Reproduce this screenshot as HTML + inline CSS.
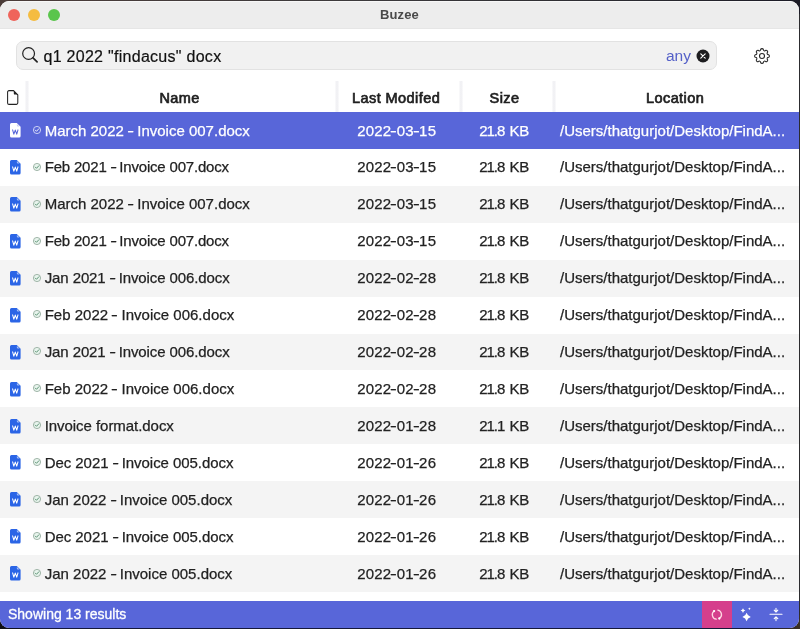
<!DOCTYPE html>
<html>
<head>
<meta charset="utf-8">
<title>Buzee</title>
<style>
*{box-sizing:border-box;margin:0;padding:0}
html,body{width:800px;height:629px;overflow:hidden;background:#2c2c2f}
.bg{position:absolute;left:0;width:800px;height:14px}
body{font-family:"Liberation Sans",sans-serif;position:relative}
#win{position:absolute;left:0;top:1px;width:799px;height:626.5px;background:#fff;border-radius:9px;overflow:hidden}
#in{position:absolute;left:0;top:-1px;width:799px;height:629px;will-change:transform}
#in>*{position:absolute}
#title{left:0;top:1px;width:100%;height:27.6px;background:#ededed;border-bottom:1px solid #e6e6e6;border-top:1px solid #f7f7f7}
#title .t{position:absolute;left:0;width:100%;top:5px;text-align:center;font-size:13px;font-weight:bold;color:#4a4a4a;letter-spacing:.1px}
.dot{position:absolute;top:7px;width:12px;height:12px;border-radius:50%}
#search{left:16px;top:41px;width:701px;height:29px;background:#f1f1f1;border:1px solid #e2e2e2;border-radius:7px}
#search .q{position:absolute;left:26.5px;top:5.8px;font-size:16px;letter-spacing:.28px;color:#111;white-space:nowrap;-webkit-text-stroke:.2px #111}
#search .any{position:absolute;left:649px;top:5px;font-size:15.5px;color:#5561c8}
svg{position:absolute;overflow:visible}
#hdr{left:0;top:81px;width:100%;height:31px;font-size:14.5px;color:#1f1f1f;-webkit-text-stroke:.7px currentColor;letter-spacing:.42px}
#hdr div.h{position:absolute;top:9px;width:200px;margin-left:-100px;text-align:center;white-space:nowrap}
#hdr i{position:absolute;top:0;height:31px;width:4px;background:linear-gradient(90deg,#fbfbfc,#f1f1f4 40%,#f1f1f4 60%,#fbfbfc)}
.row{left:0;width:100%;font-size:15px;color:#222;white-space:nowrap;-webkit-text-stroke:.25px currentColor}
.row.g{background:#f4f4f4}
.row.s{background:#5866d9;color:#fff}
.row span{position:absolute;top:9.4px}
.row .n{left:44.7px}
.row i{display:inline-block;font-style:normal;transform:scaleX(1.35)}
.row .d{left:336.2px;width:121px;text-align:center;letter-spacing:.23px}
.row .z{left:459.1px;width:90px;text-align:center;letter-spacing:-.3px}
.row .z b{font-weight:normal;letter-spacing:-1px;margin-right:1.4px}
.row .l{left:560px}
#status{left:0;top:601px;width:100%;height:28px;background:#5866d9;color:#fff;font-size:14px}
#status .t{position:absolute;left:8px;top:5px;-webkit-text-stroke:.3px #fff}
#status .pink{position:absolute;left:702.4px;top:0;width:29.6px;height:28px;background:#d53f8c}
</style>
</head>
<body>
<div class="bg" style="top:0;background:linear-gradient(90deg,#4b3c39,#3c3a3c 45%,#2a2a30 80%,#1c1b26)"></div>
<div class="bg" style="top:615px;background:linear-gradient(90deg,#0e0e12,#15183a 6%,#15183a 94%,#3a2f25)"></div>
<div id="win"><div id="in">
  <div id="title">
    <div class="dot" style="left:8px;background:#ef645b"></div>
    <div class="dot" style="left:28px;background:#f5bc40"></div>
    <div class="dot" style="left:48px;background:#5ac54c"></div>
    <div class="t">Buzee</div>
  </div>
  <div id="search">
    <svg style="left:0;top:0" width="30" height="29"><g fill="none" stroke="#222" stroke-linecap="round"><circle cx="11.6" cy="11.5" r="5.9" stroke-width="1.2"/><path d="M16 15.9L20.1 19.9" stroke-width="1.7"/></g></svg>
    <span class="q">q1 2022 "findacus" docx</span>
    <span class="any">any</span>
    <svg style="left:679.1px;top:6.7px" width="14" height="14" viewBox="-7 -7 14 14"><circle r="6.5" fill="#1d1d1f"/><path d="M-2.2-2.2L2.2 2.2M2.2-2.2L-2.2 2.2" stroke="#fff" stroke-width="1.1" stroke-linecap="round"/></svg>
  </div>
  <svg id="gear" style="left:754px;top:47.8px" width="16" height="16" viewBox="-8 -8 16 16"><path d="M-2.14 -5.17 Q-1.35 -5.43 -1.30 -6.68 Q-1.03 -7.33 0.00 -7.40 Q1.03 -7.33 1.30 -6.68 Q1.35 -5.43 2.14 -5.17 Q2.88 -4.80 3.80 -5.64 Q4.45 -5.91 5.23 -5.23 Q5.91 -4.45 5.64 -3.80 Q4.80 -2.88 5.17 -2.14 Q5.43 -1.35 6.68 -1.30 Q7.33 -1.03 7.40 0.00 Q7.33 1.03 6.68 1.30 Q5.43 1.35 5.17 2.14 Q4.80 2.88 5.64 3.80 Q5.91 4.45 5.23 5.23 Q4.45 5.91 3.80 5.64 Q2.88 4.80 2.14 5.17 Q1.35 5.43 1.30 6.68 Q1.03 7.33 0.00 7.40 Q-1.03 7.33 -1.30 6.68 Q-1.35 5.43 -2.14 5.17 Q-2.88 4.80 -3.80 5.64 Q-4.45 5.91 -5.23 5.23 Q-5.91 4.45 -5.64 3.80 Q-4.80 2.88 -5.17 2.14 Q-5.43 1.35 -6.68 1.30 Q-7.33 1.03 -7.40 0.00 Q-7.33 -1.03 -6.68 -1.30 Q-5.43 -1.35 -5.17 -2.14 Q-4.80 -2.88 -5.64 -3.80 Q-5.91 -4.45 -5.23 -5.23 Q-4.45 -5.91 -3.80 -5.64 Q-2.88 -4.80 -2.14 -5.17Z" fill="none" stroke="#2a2a2a" stroke-width="1.1" stroke-linejoin="round"/><circle r="2.5" fill="none" stroke="#2a2a2a" stroke-width="1.1"/></svg>
  <div id="hdr">
    <i style="left:25px"></i><i style="left:334.5px"></i><i style="left:459.2px"></i><i style="left:552.2px"></i>
    <svg style="left:6.8px;top:9px" width="11.4" height="15" viewBox="0 0 11.4 15"><path d="M2 .6h4.6l4.2 4.2v8a1.6 1.6 0 0 1-1.6 1.6H2A1.4 1.4 0 0 1 .6 13V2A1.4 1.4 0 0 1 2 .6z" fill="none" stroke="#222" stroke-width="1.05" stroke-linejoin="round"/><path d="M6.8.8v2.6a1.2 1.2 0 0 0 1.2 1.2h2.6z" fill="#222"/></svg>
    <div class="h" style="left:179.6px">Name</div>
    <div class="h" style="left:396.1px">Last Modifed</div>
    <div class="h" style="left:504.5px">Size</div>
    <div class="h" style="left:675.1px">Location</div>
  </div>
  <div class="row s" style="top:112px;height:37px"><svg style="left:10px;top:11.15px" width="10.6" height="14.6" viewBox="0 0 10.6 14.6"><path d="M1.5 0h5.3l3.8 3.8v9.3a1.5 1.5 0 0 1-1.5 1.5H1.5A1.5 1.5 0 0 1 0 13.1V1.5A1.5 1.5 0 0 1 1.5 0z" fill="#fff"/><path d="M6.9.9v1.7a1 1 0 0 0 1 1h1.7z" fill="#c9cdf2"/><path d="M2.6 6.9l1.25 4.3 1.45-4.1 1.45 4.1L8 6.9" fill="none" stroke="#5866d9" stroke-width="1.05" stroke-linejoin="round" stroke-linecap="round"/></svg><svg style="left:32.9px;top:13.85px" width="8" height="8" viewBox="-4 -4 8 8"><circle r="3.6" fill="none" stroke="#e6e8fa" stroke-width=".8"/><path d="M-1.7 .1L-.5 1.3 1.8-1.2" fill="none" stroke="#fff" stroke-width=".9" stroke-linecap="round" stroke-linejoin="round"/></svg><span class="n" style="top:9.5px">March 2022 <i>-</i> Invoice 007.docx</span><span class="d" style="top:9.5px">2022<i>-</i>03<i>-</i>15</span><span class="z" style="top:9.5px"><b>21.8</b> KB</span><span class="l" style="top:9.5px">/Users/thatgurjot/Desktop/FindA...</span></div>
  <div class="row" style="top:149px;height:37px"><svg style="left:10px;top:11.08px" width="10.6" height="14.6" viewBox="0 0 10.6 14.6"><path d="M1.5 0h5.3l3.8 3.8v9.3a1.5 1.5 0 0 1-1.5 1.5H1.5A1.5 1.5 0 0 1 0 13.1V1.5A1.5 1.5 0 0 1 1.5 0z" fill="#2b65e6"/><path d="M6.9.9v1.7a1 1 0 0 0 1 1h1.7z" fill="#a9c1f7"/><path d="M2.6 6.9l1.25 4.3 1.45-4.1 1.45 4.1L8 6.9" fill="none" stroke="#fff" stroke-width="1.05" stroke-linejoin="round" stroke-linecap="round"/></svg><svg style="left:32.9px;top:13.78px" width="8" height="8" viewBox="-4 -4 8 8"><circle r="3.6" fill="#e8f4ed" stroke="#8da697" stroke-width=".8"/><path d="M-1.7 .1L-.5 1.3 1.8-1.2" fill="none" stroke="#4f8a69" stroke-width=".9" stroke-linecap="round" stroke-linejoin="round"/></svg><span class="n" style="top:9.47px;letter-spacing:-0.19px">Feb 2021 <i>-</i> Invoice 007.docx</span><span class="d" style="top:9.47px">2022<i>-</i>03<i>-</i>15</span><span class="z" style="top:9.47px"><b>21.8</b> KB</span><span class="l" style="top:9.47px">/Users/thatgurjot/Desktop/FindA...</span></div>
  <div class="row g" style="top:186px;height:37px"><svg style="left:10px;top:11.00px" width="10.6" height="14.6" viewBox="0 0 10.6 14.6"><path d="M1.5 0h5.3l3.8 3.8v9.3a1.5 1.5 0 0 1-1.5 1.5H1.5A1.5 1.5 0 0 1 0 13.1V1.5A1.5 1.5 0 0 1 1.5 0z" fill="#2b65e6"/><path d="M6.9.9v1.7a1 1 0 0 0 1 1h1.7z" fill="#a9c1f7"/><path d="M2.6 6.9l1.25 4.3 1.45-4.1 1.45 4.1L8 6.9" fill="none" stroke="#fff" stroke-width="1.05" stroke-linejoin="round" stroke-linecap="round"/></svg><svg style="left:32.9px;top:13.70px" width="8" height="8" viewBox="-4 -4 8 8"><circle r="3.6" fill="#e8f4ed" stroke="#8da697" stroke-width=".8"/><path d="M-1.7 .1L-.5 1.3 1.8-1.2" fill="none" stroke="#4f8a69" stroke-width=".9" stroke-linecap="round" stroke-linejoin="round"/></svg><span class="n" style="top:9.44px">March 2022 <i>-</i> Invoice 007.docx</span><span class="d" style="top:9.44px">2022<i>-</i>03<i>-</i>15</span><span class="z" style="top:9.44px"><b>21.8</b> KB</span><span class="l" style="top:9.44px">/Users/thatgurjot/Desktop/FindA...</span></div>
  <div class="row" style="top:223px;height:37px"><svg style="left:10px;top:10.92px" width="10.6" height="14.6" viewBox="0 0 10.6 14.6"><path d="M1.5 0h5.3l3.8 3.8v9.3a1.5 1.5 0 0 1-1.5 1.5H1.5A1.5 1.5 0 0 1 0 13.1V1.5A1.5 1.5 0 0 1 1.5 0z" fill="#2b65e6"/><path d="M6.9.9v1.7a1 1 0 0 0 1 1h1.7z" fill="#a9c1f7"/><path d="M2.6 6.9l1.25 4.3 1.45-4.1 1.45 4.1L8 6.9" fill="none" stroke="#fff" stroke-width="1.05" stroke-linejoin="round" stroke-linecap="round"/></svg><svg style="left:32.9px;top:13.62px" width="8" height="8" viewBox="-4 -4 8 8"><circle r="3.6" fill="#e8f4ed" stroke="#8da697" stroke-width=".8"/><path d="M-1.7 .1L-.5 1.3 1.8-1.2" fill="none" stroke="#4f8a69" stroke-width=".9" stroke-linecap="round" stroke-linejoin="round"/></svg><span class="n" style="top:9.41px;letter-spacing:-0.19px">Feb 2021 <i>-</i> Invoice 007.docx</span><span class="d" style="top:9.41px">2022<i>-</i>03<i>-</i>15</span><span class="z" style="top:9.41px"><b>21.8</b> KB</span><span class="l" style="top:9.41px">/Users/thatgurjot/Desktop/FindA...</span></div>
  <div class="row g" style="top:260px;height:37px"><svg style="left:10px;top:10.85px" width="10.6" height="14.6" viewBox="0 0 10.6 14.6"><path d="M1.5 0h5.3l3.8 3.8v9.3a1.5 1.5 0 0 1-1.5 1.5H1.5A1.5 1.5 0 0 1 0 13.1V1.5A1.5 1.5 0 0 1 1.5 0z" fill="#2b65e6"/><path d="M6.9.9v1.7a1 1 0 0 0 1 1h1.7z" fill="#a9c1f7"/><path d="M2.6 6.9l1.25 4.3 1.45-4.1 1.45 4.1L8 6.9" fill="none" stroke="#fff" stroke-width="1.05" stroke-linejoin="round" stroke-linecap="round"/></svg><svg style="left:32.9px;top:13.55px" width="8" height="8" viewBox="-4 -4 8 8"><circle r="3.6" fill="#e8f4ed" stroke="#8da697" stroke-width=".8"/><path d="M-1.7 .1L-.5 1.3 1.8-1.2" fill="none" stroke="#4f8a69" stroke-width=".9" stroke-linecap="round" stroke-linejoin="round"/></svg><span class="n" style="top:9.38px;letter-spacing:-0.1px">Jan 2021 <i>-</i> Invoice 006.docx</span><span class="d" style="top:9.38px">2022<i>-</i>02<i>-</i>28</span><span class="z" style="top:9.38px"><b>21.8</b> KB</span><span class="l" style="top:9.38px">/Users/thatgurjot/Desktop/FindA...</span></div>
  <div class="row" style="top:297px;height:37px"><svg style="left:10px;top:10.77px" width="10.6" height="14.6" viewBox="0 0 10.6 14.6"><path d="M1.5 0h5.3l3.8 3.8v9.3a1.5 1.5 0 0 1-1.5 1.5H1.5A1.5 1.5 0 0 1 0 13.1V1.5A1.5 1.5 0 0 1 1.5 0z" fill="#2b65e6"/><path d="M6.9.9v1.7a1 1 0 0 0 1 1h1.7z" fill="#a9c1f7"/><path d="M2.6 6.9l1.25 4.3 1.45-4.1 1.45 4.1L8 6.9" fill="none" stroke="#fff" stroke-width="1.05" stroke-linejoin="round" stroke-linecap="round"/></svg><svg style="left:32.9px;top:13.47px" width="8" height="8" viewBox="-4 -4 8 8"><circle r="3.6" fill="#e8f4ed" stroke="#8da697" stroke-width=".8"/><path d="M-1.7 .1L-.5 1.3 1.8-1.2" fill="none" stroke="#4f8a69" stroke-width=".9" stroke-linecap="round" stroke-linejoin="round"/></svg><span class="n" style="top:9.35px;letter-spacing:0.01px">Feb 2022 <i>-</i> Invoice 006.docx</span><span class="d" style="top:9.35px">2022<i>-</i>02<i>-</i>28</span><span class="z" style="top:9.35px"><b>21.8</b> KB</span><span class="l" style="top:9.35px">/Users/thatgurjot/Desktop/FindA...</span></div>
  <div class="row g" style="top:334px;height:36px"><svg style="left:10px;top:10.70px" width="10.6" height="14.6" viewBox="0 0 10.6 14.6"><path d="M1.5 0h5.3l3.8 3.8v9.3a1.5 1.5 0 0 1-1.5 1.5H1.5A1.5 1.5 0 0 1 0 13.1V1.5A1.5 1.5 0 0 1 1.5 0z" fill="#2b65e6"/><path d="M6.9.9v1.7a1 1 0 0 0 1 1h1.7z" fill="#a9c1f7"/><path d="M2.6 6.9l1.25 4.3 1.45-4.1 1.45 4.1L8 6.9" fill="none" stroke="#fff" stroke-width="1.05" stroke-linejoin="round" stroke-linecap="round"/></svg><svg style="left:32.9px;top:13.40px" width="8" height="8" viewBox="-4 -4 8 8"><circle r="3.6" fill="#e8f4ed" stroke="#8da697" stroke-width=".8"/><path d="M-1.7 .1L-.5 1.3 1.8-1.2" fill="none" stroke="#4f8a69" stroke-width=".9" stroke-linecap="round" stroke-linejoin="round"/></svg><span class="n" style="top:9.32px;letter-spacing:-0.1px">Jan 2021 <i>-</i> Invoice 006.docx</span><span class="d" style="top:9.32px">2022<i>-</i>02<i>-</i>28</span><span class="z" style="top:9.32px"><b>21.8</b> KB</span><span class="l" style="top:9.32px">/Users/thatgurjot/Desktop/FindA...</span></div>
  <div class="row" style="top:370px;height:37px"><svg style="left:10px;top:11.62px" width="10.6" height="14.6" viewBox="0 0 10.6 14.6"><path d="M1.5 0h5.3l3.8 3.8v9.3a1.5 1.5 0 0 1-1.5 1.5H1.5A1.5 1.5 0 0 1 0 13.1V1.5A1.5 1.5 0 0 1 1.5 0z" fill="#2b65e6"/><path d="M6.9.9v1.7a1 1 0 0 0 1 1h1.7z" fill="#a9c1f7"/><path d="M2.6 6.9l1.25 4.3 1.45-4.1 1.45 4.1L8 6.9" fill="none" stroke="#fff" stroke-width="1.05" stroke-linejoin="round" stroke-linecap="round"/></svg><svg style="left:32.9px;top:14.32px" width="8" height="8" viewBox="-4 -4 8 8"><circle r="3.6" fill="#e8f4ed" stroke="#8da697" stroke-width=".8"/><path d="M-1.7 .1L-.5 1.3 1.8-1.2" fill="none" stroke="#4f8a69" stroke-width=".9" stroke-linecap="round" stroke-linejoin="round"/></svg><span class="n" style="top:10.29px;letter-spacing:0.01px">Feb 2022 <i>-</i> Invoice 006.docx</span><span class="d" style="top:10.29px">2022<i>-</i>02<i>-</i>28</span><span class="z" style="top:10.29px"><b>21.8</b> KB</span><span class="l" style="top:10.29px">/Users/thatgurjot/Desktop/FindA...</span></div>
  <div class="row g" style="top:407px;height:37px"><svg style="left:10px;top:11.55px" width="10.6" height="14.6" viewBox="0 0 10.6 14.6"><path d="M1.5 0h5.3l3.8 3.8v9.3a1.5 1.5 0 0 1-1.5 1.5H1.5A1.5 1.5 0 0 1 0 13.1V1.5A1.5 1.5 0 0 1 1.5 0z" fill="#2b65e6"/><path d="M6.9.9v1.7a1 1 0 0 0 1 1h1.7z" fill="#a9c1f7"/><path d="M2.6 6.9l1.25 4.3 1.45-4.1 1.45 4.1L8 6.9" fill="none" stroke="#fff" stroke-width="1.05" stroke-linejoin="round" stroke-linecap="round"/></svg><svg style="left:32.9px;top:14.25px" width="8" height="8" viewBox="-4 -4 8 8"><circle r="3.6" fill="#e8f4ed" stroke="#8da697" stroke-width=".8"/><path d="M-1.7 .1L-.5 1.3 1.8-1.2" fill="none" stroke="#4f8a69" stroke-width=".9" stroke-linecap="round" stroke-linejoin="round"/></svg><span class="n" style="top:10.26px;letter-spacing:-0.05px">Invoice format.docx</span><span class="d" style="top:10.26px">2022<i>-</i>01<i>-</i>28</span><span class="z" style="top:10.26px"><b>21.1</b> KB</span><span class="l" style="top:10.26px">/Users/thatgurjot/Desktop/FindA...</span></div>
  <div class="row" style="top:444px;height:37px"><svg style="left:10px;top:11.47px" width="10.6" height="14.6" viewBox="0 0 10.6 14.6"><path d="M1.5 0h5.3l3.8 3.8v9.3a1.5 1.5 0 0 1-1.5 1.5H1.5A1.5 1.5 0 0 1 0 13.1V1.5A1.5 1.5 0 0 1 1.5 0z" fill="#2b65e6"/><path d="M6.9.9v1.7a1 1 0 0 0 1 1h1.7z" fill="#a9c1f7"/><path d="M2.6 6.9l1.25 4.3 1.45-4.1 1.45 4.1L8 6.9" fill="none" stroke="#fff" stroke-width="1.05" stroke-linejoin="round" stroke-linecap="round"/></svg><svg style="left:32.9px;top:14.17px" width="8" height="8" viewBox="-4 -4 8 8"><circle r="3.6" fill="#e8f4ed" stroke="#8da697" stroke-width=".8"/><path d="M-1.7 .1L-.5 1.3 1.8-1.2" fill="none" stroke="#4f8a69" stroke-width=".9" stroke-linecap="round" stroke-linejoin="round"/></svg><span class="n" style="top:10.23px;letter-spacing:-0.05px">Dec 2021 <i>-</i> Invoice 005.docx</span><span class="d" style="top:10.23px">2022<i>-</i>01<i>-</i>26</span><span class="z" style="top:10.23px"><b>21.8</b> KB</span><span class="l" style="top:10.23px">/Users/thatgurjot/Desktop/FindA...</span></div>
  <div class="row g" style="top:481px;height:37px"><svg style="left:10px;top:11.40px" width="10.6" height="14.6" viewBox="0 0 10.6 14.6"><path d="M1.5 0h5.3l3.8 3.8v9.3a1.5 1.5 0 0 1-1.5 1.5H1.5A1.5 1.5 0 0 1 0 13.1V1.5A1.5 1.5 0 0 1 1.5 0z" fill="#2b65e6"/><path d="M6.9.9v1.7a1 1 0 0 0 1 1h1.7z" fill="#a9c1f7"/><path d="M2.6 6.9l1.25 4.3 1.45-4.1 1.45 4.1L8 6.9" fill="none" stroke="#fff" stroke-width="1.05" stroke-linejoin="round" stroke-linecap="round"/></svg><svg style="left:32.9px;top:14.10px" width="8" height="8" viewBox="-4 -4 8 8"><circle r="3.6" fill="#e8f4ed" stroke="#8da697" stroke-width=".8"/><path d="M-1.7 .1L-.5 1.3 1.8-1.2" fill="none" stroke="#4f8a69" stroke-width=".9" stroke-linecap="round" stroke-linejoin="round"/></svg><span class="n" style="top:10.2px">Jan 2022 <i>-</i> Invoice 005.docx</span><span class="d" style="top:10.2px">2022<i>-</i>01<i>-</i>26</span><span class="z" style="top:10.2px"><b>21.8</b> KB</span><span class="l" style="top:10.2px">/Users/thatgurjot/Desktop/FindA...</span></div>
  <div class="row" style="top:518px;height:37px"><svg style="left:10px;top:11.32px" width="10.6" height="14.6" viewBox="0 0 10.6 14.6"><path d="M1.5 0h5.3l3.8 3.8v9.3a1.5 1.5 0 0 1-1.5 1.5H1.5A1.5 1.5 0 0 1 0 13.1V1.5A1.5 1.5 0 0 1 1.5 0z" fill="#2b65e6"/><path d="M6.9.9v1.7a1 1 0 0 0 1 1h1.7z" fill="#a9c1f7"/><path d="M2.6 6.9l1.25 4.3 1.45-4.1 1.45 4.1L8 6.9" fill="none" stroke="#fff" stroke-width="1.05" stroke-linejoin="round" stroke-linecap="round"/></svg><svg style="left:32.9px;top:14.02px" width="8" height="8" viewBox="-4 -4 8 8"><circle r="3.6" fill="#e8f4ed" stroke="#8da697" stroke-width=".8"/><path d="M-1.7 .1L-.5 1.3 1.8-1.2" fill="none" stroke="#4f8a69" stroke-width=".9" stroke-linecap="round" stroke-linejoin="round"/></svg><span class="n" style="top:10.17px;letter-spacing:-0.05px">Dec 2021 <i>-</i> Invoice 005.docx</span><span class="d" style="top:10.17px">2022<i>-</i>01<i>-</i>26</span><span class="z" style="top:10.17px"><b>21.8</b> KB</span><span class="l" style="top:10.17px">/Users/thatgurjot/Desktop/FindA...</span></div>
  <div class="row g" style="top:555px;height:37px"><svg style="left:10px;top:11.25px" width="10.6" height="14.6" viewBox="0 0 10.6 14.6"><path d="M1.5 0h5.3l3.8 3.8v9.3a1.5 1.5 0 0 1-1.5 1.5H1.5A1.5 1.5 0 0 1 0 13.1V1.5A1.5 1.5 0 0 1 1.5 0z" fill="#2b65e6"/><path d="M6.9.9v1.7a1 1 0 0 0 1 1h1.7z" fill="#a9c1f7"/><path d="M2.6 6.9l1.25 4.3 1.45-4.1 1.45 4.1L8 6.9" fill="none" stroke="#fff" stroke-width="1.05" stroke-linejoin="round" stroke-linecap="round"/></svg><svg style="left:32.9px;top:13.95px" width="8" height="8" viewBox="-4 -4 8 8"><circle r="3.6" fill="#e8f4ed" stroke="#8da697" stroke-width=".8"/><path d="M-1.7 .1L-.5 1.3 1.8-1.2" fill="none" stroke="#4f8a69" stroke-width=".9" stroke-linecap="round" stroke-linejoin="round"/></svg><span class="n" style="top:10.14px">Jan 2022 <i>-</i> Invoice 005.docx</span><span class="d" style="top:10.14px">2022<i>-</i>01<i>-</i>26</span><span class="z" style="top:10.14px"><b>21.8</b> KB</span><span class="l" style="top:10.14px">/Users/thatgurjot/Desktop/FindA...</span></div>

  <div id="status"><span class="t">Showing 13 results</span><div class="pink"></div>
  <svg style="left:0;top:0" width="799" height="28"><g fill="none" stroke="#fed7e2" stroke-width="1.3" stroke-linecap="round" stroke-linejoin="round"><path d="M714.07 9.98A4.6 4.6 0 0 0 716.26 18.16"/><path d="M717.86 9.1A4.6 4.6 0 0 1 719.34 17.5"/></g><circle cx="714.1" cy="10.1" r="1.15" fill="#fff"/><circle cx="719.3" cy="17.5" r="1.15" fill="#fff"/><path d="M746.6 11.8Q747.524 15.076 750.8000000000001 16Q747.524 16.924 746.6 20.2Q745.676 16.924 742.4 16Q745.676 15.076 746.6 11.8ZM743 7.199999999999999Q743.528 9.072 745.4 9.6Q743.528 10.128 743 12.0Q742.472 10.128 740.6 9.6Q742.472 9.072 743 7.199999999999999ZM749.4 6.5Q749.6859999999999 7.513999999999999 750.6999999999999 7.8Q749.6859999999999 8.086 749.4 9.1Q749.114 8.086 748.1 7.8Q749.114 7.513999999999999 749.4 6.5Z" fill="#fff"/><g stroke="#fff" stroke-width="1.1" fill="none" stroke-linecap="round" stroke-linejoin="round"><path d="M770 13.3H782"/><path d="M776 7.2V10.8M774.2 9.2L776 11 777.8 9.2"/><path d="M776 19.6V16M774.2 17.6L776 15.8 777.8 17.6"/></g></svg>
  </div>
</div></div>
</body>
</html>
